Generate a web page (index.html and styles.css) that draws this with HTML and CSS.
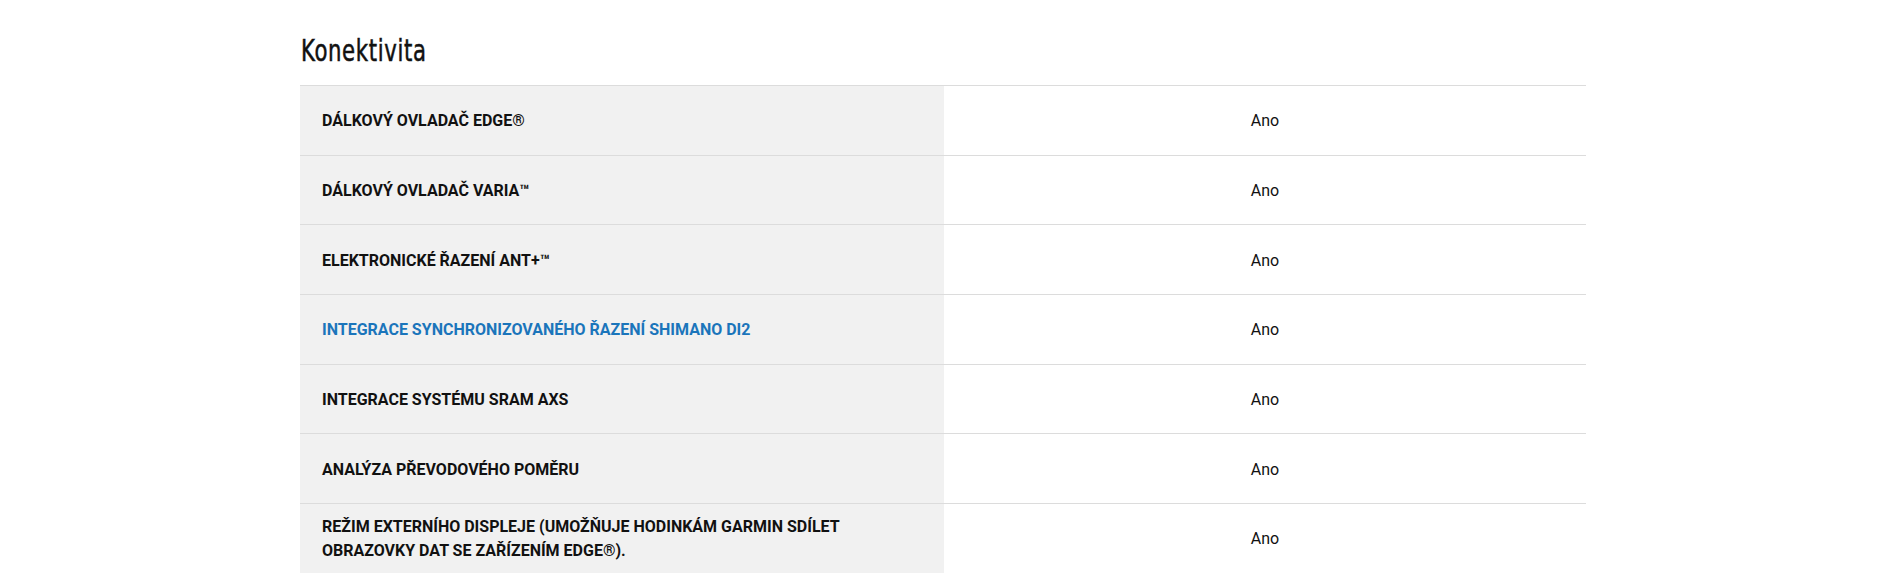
FILE: index.html
```html
<!DOCTYPE html>
<html lang="cs">
<head>
<meta charset="utf-8">
<title>Konektivita</title>
<link rel="stylesheet" href="styles.css">
</head>
<body>
<section class="specs">
  <h2 class="specs-title"><span class="specs-title-text">Konektivita</span></h2>
  <div class="spec-table">
    <div class="spec-row">
      <div class="spec-label">Dálkový ovladač Edge®</div>
      <div class="spec-value">Ano</div>
    </div>
    <div class="spec-row">
      <div class="spec-label">Dálkový ovladač Varia™</div>
      <div class="spec-value">Ano</div>
    </div>
    <div class="spec-row">
      <div class="spec-label">Elektronické řazení ANT+™</div>
      <div class="spec-value">Ano</div>
    </div>
    <div class="spec-row">
      <div class="spec-label"><a class="spec-link" href="#">Integrace synchronizovaného řazení Shimano Di2</a></div>
      <div class="spec-value">Ano</div>
    </div>
    <div class="spec-row">
      <div class="spec-label">Integrace systému SRAM AXS</div>
      <div class="spec-value">Ano</div>
    </div>
    <div class="spec-row">
      <div class="spec-label">Analýza převodového poměru</div>
      <div class="spec-value">Ano</div>
    </div>
    <div class="spec-row">
      <div class="spec-label">Režim externího displeje (umožňuje hodinkám Garmin sdílet obrazovky dat se zařízením Edge®).</div>
      <div class="spec-value">Ano</div>
    </div>
  </div>
</section>
</body>
</html>
```

FILE: styles.css
```css
html, body {
  margin: 0;
  padding: 0;
  background: #ffffff;
}

body {
  font-family: Roboto, "Liberation Sans", Arial, sans-serif;
  color: #111111;
}

.specs {
  width: 1286px;
  margin-left: 300px;
  padding-top: 33px;
}

.specs-title {
  margin: 0 0 15px 1px;
  font-family: "DejaVu Sans Condensed", "DejaVu Sans", sans-serif;
  font-weight: 400;
  font-size: 29.5px;
  line-height: 37px;
  color: #111111;
}

.specs-title-text {
  display: inline-block;
  transform: scaleX(0.8);
  transform-origin: left center;
  -webkit-text-stroke: 0.5px #111111;
  letter-spacing: 0.8px;
}

.spec-table {
  display: flex;
  flex-direction: column;
}

.spec-row {
  display: grid;
  grid-template-columns: 644px 1fr;
  min-height: 68.67px;
  border-top: 1px solid #dcdcdc;
}

.spec-label {
  display: flex;
  align-items: center;
  padding: 11px 70px 9px 22px;
  background: #f1f1f1;
  font-size: 16px;
  line-height: 24px;
  font-weight: 700;
  text-transform: uppercase;
  color: #111111;
}

.spec-link {
  color: #1b75bb;
  text-decoration: none;
}

.spec-value {
  display: flex;
  align-items: center;
  justify-content: center;
  padding: 11px 22px 9px;
  font-size: 16px;
  line-height: 24px;
  font-weight: 400;
  color: #111111;
}
```
